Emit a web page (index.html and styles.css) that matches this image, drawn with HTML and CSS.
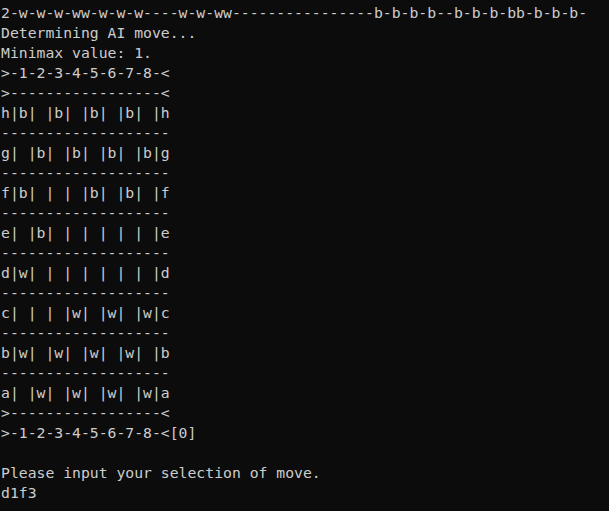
FILE: index.html
```html
<!DOCTYPE html>
<html lang="en">
<head>
<meta charset="utf-8">
<title>Console</title>
<link rel="stylesheet" href="styles.css">
</head>
<body>
<pre class="console">2-w-w-w-ww-w-w-w----w-w-ww----------------b-b-b-b--b-b-b-bb-b-b-b-
Determining AI move...
Minimax value: 1.
&gt;-1-2-3-4-5-6-7-8-&lt;
&gt;-----------------&lt;
h|b| |b| |b| |b| |h
-------------------
g| |b| |b| |b| |b|g
-------------------
f|b| | | |b| |b| |f
-------------------
e| |b| | | | | | |e
-------------------
d|w| | | | | | | |d
-------------------
c| | | |w| |w| |w|c
-------------------
b|w| |w| |w| |w| |b
-------------------
a| |w| |w| |w| |w|a
&gt;-----------------&lt;
&gt;-1-2-3-4-5-6-7-8-&lt;[0]

Please input your selection of move.
d1f3</pre>
</body>
</html>
```
FILE: styles.css
```css
html, body {
  margin: 0;
  padding: 0;
  background: #0c0c0c;
  height: 100%;
}
.console {
  margin: 0;
  padding: 3px 0 0 1px;
  font-family: "DejaVu Sans Mono", "Liberation Mono", monospace;
  font-size: 14.75px;
  line-height: 20px;
  color: #cccccc;
  white-space: pre;
}
```
